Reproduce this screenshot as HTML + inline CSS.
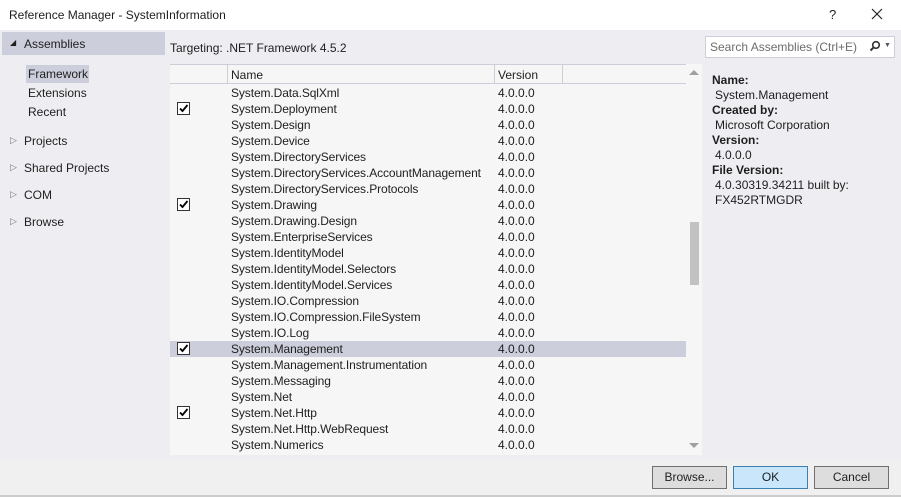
<!DOCTYPE html>
<html><head><style>
*{margin:0;padding:0;box-sizing:border-box}
body{width:901px;height:497px;background:#eeeef2;font-family:"Liberation Sans",sans-serif;font-size:12px;color:#1e1e1e;position:relative;overflow:hidden}
.a{position:absolute;white-space:nowrap}
.row{position:absolute;left:170px;width:516px;height:16px}
.row .n{position:absolute;left:61px;top:2px;letter-spacing:-0.1px}
.row .v{position:absolute;left:328px;top:2px}
.cb{position:absolute;left:7px;top:2px;width:13px;height:13px;border:1px solid #333;background:#fff}
.btn{position:absolute;top:466px;height:23px;border:1px solid #707070;background:#dddddd;text-align:center;line-height:21px}
</style></head><body>
<div class="a" style="left:0;top:0;width:901px;height:30px;background:#fff"></div>
<div class="a" style="left:9px;top:8px;font-size:12px">Reference Manager - SystemInformation</div>
<div class="a" style="left:829px;top:7px;font-size:13px">?</div>
<svg class="a" style="left:871px;top:8px" width="12" height="12"><path d="M1 1L11 11M11 1L1 11" stroke="#222" stroke-width="1.2"/></svg>

<div class="a" style="left:2px;top:32px;width:163px;height:23px;background:#cccedb"></div>
<div class="a" style="left:10px;top:38px;font-size:8px">◢</div>
<div class="a" style="left:24px;top:37px">Assemblies</div>
<div class="a" style="left:26px;top:65px;width:63px;height:18px;background:#cccedb"></div>
<div class="a" style="left:28px;top:67px">Framework</div>
<div class="a" style="left:28px;top:86px">Extensions</div>
<div class="a" style="left:28px;top:105px">Recent</div>
<div class="a" style="left:10px;top:135px;font-size:9px;color:#777">▷</div><div class="a" style="left:24px;top:134px">Projects</div>
<div class="a" style="left:10px;top:162px;font-size:9px;color:#777">▷</div><div class="a" style="left:24px;top:161px">Shared Projects</div>
<div class="a" style="left:10px;top:189px;font-size:9px;color:#777">▷</div><div class="a" style="left:24px;top:188px">COM</div>
<div class="a" style="left:10px;top:216px;font-size:9px;color:#777">▷</div><div class="a" style="left:24px;top:215px">Browse</div>

<div class="a" style="left:170px;top:41px">Targeting: .NET Framework 4.5.2</div>

<div class="a" style="left:170px;top:64px;width:532px;height:391px;background:#f6f6f6"></div>
<div class="a" style="left:170px;top:64px;width:516px;height:20px;border-top:1px solid #ccced8;border-bottom:1px solid #ccced8"></div>
<div class="a" style="left:227px;top:65px;width:1px;height:18px;background:#ccced8"></div>
<div class="a" style="left:494px;top:65px;width:1px;height:18px;background:#ccced8"></div>
<div class="a" style="left:562px;top:65px;width:1px;height:18px;background:#ccced8"></div>
<div class="a" style="left:231px;top:68px">Name</div>
<div class="a" style="left:498px;top:68px">Version</div>
<svg class="a" style="left:689px;top:69px" width="10" height="6"><path d="M0 6L5 1L10 6Z" fill="#a0a0a0"/></svg>
<div class="a" style="left:690px;top:222px;width:9px;height:63px;background:#c2c2c2"></div>
<svg class="a" style="left:689px;top:443px" width="10" height="6"><path d="M0 0L10 0L5 5Z" fill="#a0a0a0"/></svg>
<div class="a" style="left:170px;top:341px;width:516px;height:16px;background:#cccedb"></div>

<div class="row" style="top:84px"><span class="n">System.Data.SqlXml</span><span class="v">4.0.0.0</span></div>
<div class="row" style="top:100px"><div class="cb"><svg width="11" height="11" style="position:absolute;left:0;top:0"><path d="M2 5.5L4.5 8L9.5 2" stroke="#000" stroke-width="1.8" fill="none"/></svg></div><span class="n">System.Deployment</span><span class="v">4.0.0.0</span></div>
<div class="row" style="top:116px"><span class="n">System.Design</span><span class="v">4.0.0.0</span></div>
<div class="row" style="top:132px"><span class="n">System.Device</span><span class="v">4.0.0.0</span></div>
<div class="row" style="top:148px"><span class="n">System.DirectoryServices</span><span class="v">4.0.0.0</span></div>
<div class="row" style="top:164px"><span class="n">System.DirectoryServices.AccountManagement</span><span class="v">4.0.0.0</span></div>
<div class="row" style="top:180px"><span class="n">System.DirectoryServices.Protocols</span><span class="v">4.0.0.0</span></div>
<div class="row" style="top:196px"><div class="cb"><svg width="11" height="11" style="position:absolute;left:0;top:0"><path d="M2 5.5L4.5 8L9.5 2" stroke="#000" stroke-width="1.8" fill="none"/></svg></div><span class="n">System.Drawing</span><span class="v">4.0.0.0</span></div>
<div class="row" style="top:212px"><span class="n">System.Drawing.Design</span><span class="v">4.0.0.0</span></div>
<div class="row" style="top:228px"><span class="n">System.EnterpriseServices</span><span class="v">4.0.0.0</span></div>
<div class="row" style="top:244px"><span class="n">System.IdentityModel</span><span class="v">4.0.0.0</span></div>
<div class="row" style="top:260px"><span class="n">System.IdentityModel.Selectors</span><span class="v">4.0.0.0</span></div>
<div class="row" style="top:276px"><span class="n">System.IdentityModel.Services</span><span class="v">4.0.0.0</span></div>
<div class="row" style="top:292px"><span class="n">System.IO.Compression</span><span class="v">4.0.0.0</span></div>
<div class="row" style="top:308px"><span class="n">System.IO.Compression.FileSystem</span><span class="v">4.0.0.0</span></div>
<div class="row" style="top:324px"><span class="n">System.IO.Log</span><span class="v">4.0.0.0</span></div>
<div class="row" style="top:340px"><div class="cb"><svg width="11" height="11" style="position:absolute;left:0;top:0"><path d="M2 5.5L4.5 8L9.5 2" stroke="#000" stroke-width="1.8" fill="none"/></svg></div><span class="n">System.Management</span><span class="v">4.0.0.0</span></div>
<div class="row" style="top:356px"><span class="n">System.Management.Instrumentation</span><span class="v">4.0.0.0</span></div>
<div class="row" style="top:372px"><span class="n">System.Messaging</span><span class="v">4.0.0.0</span></div>
<div class="row" style="top:388px"><span class="n">System.Net</span><span class="v">4.0.0.0</span></div>
<div class="row" style="top:404px"><div class="cb"><svg width="11" height="11" style="position:absolute;left:0;top:0"><path d="M2 5.5L4.5 8L9.5 2" stroke="#000" stroke-width="1.8" fill="none"/></svg></div><span class="n">System.Net.Http</span><span class="v">4.0.0.0</span></div>
<div class="row" style="top:420px"><span class="n">System.Net.Http.WebRequest</span><span class="v">4.0.0.0</span></div>
<div class="row" style="top:436px"><span class="n">System.Numerics</span><span class="v">4.0.0.0</span></div>

<div class="a" style="left:705px;top:36px;width:190px;height:22px;background:#fff;border:1px solid #ccced8"></div>
<div class="a" style="left:710px;top:40px;color:#6d6d6d">Search Assemblies (Ctrl+E)</div>
<svg class="a" style="left:869px;top:40px" width="12" height="12"><circle cx="7" cy="5" r="3.3" stroke="#333" stroke-width="1.6" fill="none"/><path d="M4.7 7.3L1.5 10.5" stroke="#333" stroke-width="2"/></svg>
<div class="a" style="left:884px;top:42px;font-size:7px;color:#555">▼</div>

<div class="a" style="left:712px;top:73px;font-weight:bold">Name:</div>
<div class="a" style="left:715px;top:88px">System.Management</div>
<div class="a" style="left:712px;top:103px;font-weight:bold">Created by:</div>
<div class="a" style="left:715px;top:118px">Microsoft Corporation</div>
<div class="a" style="left:712px;top:133px;font-weight:bold">Version:</div>
<div class="a" style="left:715px;top:148px">4.0.0.0</div>
<div class="a" style="left:712px;top:163px;font-weight:bold">File Version:</div>
<div class="a" style="left:715px;top:178px">4.0.30319.34211 built by:</div>
<div class="a" style="left:715px;top:193px">FX452RTMGDR</div>

<div class="a" style="left:0;top:460px;width:901px;height:37px;background:#f0f0f0"></div>
<div class="a" style="left:0;top:495px;width:901px;height:2px;background:#ccc"></div>
<div class="btn" style="left:652px;width:75px">Browse...</div>
<div class="btn" style="left:733px;width:75px;background:#c9e6fa;border-color:#3c7fb1">OK</div>
<div class="btn" style="left:814px;width:75px">Cancel</div>
</body></html>
